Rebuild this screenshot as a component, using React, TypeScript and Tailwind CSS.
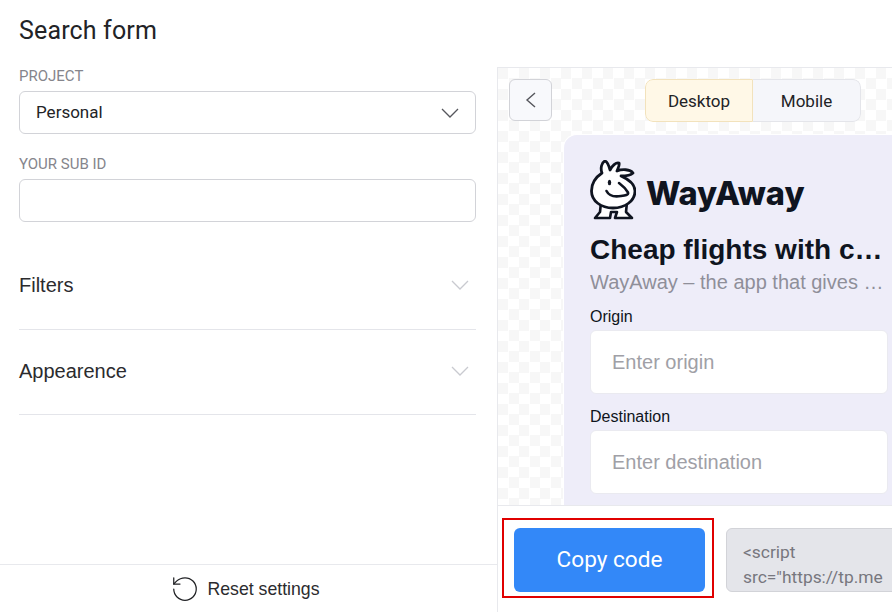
import { RotateCcw } from 'lucide-react';

function Mascot() {
  return (
    <svg width="46" height="60" viewBox="0 0 46 60" fill="none" className="shrink-0">
      <path
        d="M11 42 L10 52 L5 58 L20 58 L21 52 L27 52 L25 58 L42 58 L36 52 L37 42 Z"
        fill="#fff"
        stroke="#0f1420"
        strokeWidth="2.6"
        strokeLinejoin="round"
      />
      <path
        d="M12 13 C10 8 12 2 15 1 C18 2 19 6 20 10 C22 6 26 2 29 3 C30 5 28 8 27 11 C32 9 40 9 43 13 C40 16 35 16 31 16 C40 20 45 25 45 31 C45 41 35 48 23 48 C11 48 1.5 41 1.5 31 C1.5 23 6 17 12 13 Z"
        fill="#fff"
        stroke="#0f1420"
        strokeWidth="2.8"
        strokeLinejoin="round"
      />
      <ellipse cx="19.5" cy="22.5" rx="1.7" ry="2.8" fill="#0f1420" />
      <path
        d="M16.5 31 C19 36 25 37 31 36 C35 35.5 39 35 38 32.5 C36 29 33 26 29 23"
        stroke="#0f1420"
        strokeWidth="2.6"
        strokeLinecap="round"
      />
    </svg>
  );
}

function Chevron({ className }: { className: string }) {
  return (
    <svg width="18" height="10" viewBox="0 0 18 10" fill="none" className={className}>
      <path d="M1 1 L9 9 L17 1" stroke="currentColor" strokeWidth="1.3" />
    </svg>
  );
}

function Field({ label, placeholder }: { label: string; placeholder: string }) {
  return (
    <div className="flex flex-col">
      <div className="h-[23px] text-[16px] leading-[19px] text-[#0f1420]">{label}</div>
      <div className="flex h-[64px] items-center rounded-[6px] border border-[#eaeaf0] bg-white px-[21px] text-[20px] text-[#a0a0a6]">
        {placeholder}
      </div>
    </div>
  );
}

function Accordion({ title, height }: { title: string; height: string }) {
  return (
    <div className={`${height} flex items-center justify-between border-b border-[#e4e5ea] pr-[7px]`}>
      <span className="text-[20px] text-[#2b2b2e] [font-family:'Liberation_Sans',sans-serif]">{title}</span>
      <Chevron className="text-[#c9cad0]" />
    </div>
  );
}

export default function App() {
  return (
    <div className="flex h-[612px] w-[892px] flex-col overflow-hidden bg-white [font-family:Roboto,sans-serif]">
      <div className="flex h-[67px] items-start pl-[19px] pt-[15px] text-[25px] leading-[32px] tracking-[0.15px] text-[#222326]">
        Search form
      </div>

      <div className="flex min-h-0 flex-1">
        {/* Settings */}
        <div className="flex w-[497px] shrink-0 flex-col">
          <div className="flex-1 pl-[19px] pr-[21px]">
            <div className="flex h-[24px] items-start text-[15px] leading-[18px] text-[#85858c]">PROJECT</div>
            <div className="flex h-[43px] items-center justify-between rounded-[6px] border border-[#d2d3d8] pl-[16px] pr-[16px] text-[17px] text-[#222326]">
              Personal
              <Chevron className="text-[#55565c]" />
            </div>
            <div className="mt-[21px] flex h-[24px] items-start text-[15px] leading-[18px] text-[#85858c]">YOUR SUB ID</div>
            <div className="h-[43px] rounded-[6px] border border-[#d2d3d8]" />
            <div className="mt-[22px]">
              <Accordion title="Filters" height="h-[86px] pb-[4px]" />
              <Accordion title="Appearence" height="h-[85px] pb-[2px]" />
            </div>
          </div>
          <div className="flex h-[48px] items-center justify-center gap-[7px] border-t border-[#e8e9ed] pr-[7px] pt-[1px] text-[17.7px] text-[#2b2b2e] [font-family:'Liberation_Sans',sans-serif]">
            <RotateCcw size={30} strokeWidth={1} className="text-[#222326]" />
            Reset settings
          </div>
        </div>

        {/* Preview */}
        <div className="flex min-w-0 flex-1 flex-col border-l border-[#e8e9ed]">
          <div className="h-[439px] overflow-hidden border-y border-[#e8e9ed] bg-white bg-[conic-gradient(#ffffff_25%,#f7f7f7_0_50%,#ffffff_0_75%,#f7f7f7_0)] bg-[length:21px_21px] pl-[11px] pt-[11px]">
            <div className="flex h-[43px] items-start">
              <button className="flex h-[42px] w-[43px] items-center justify-center rounded-[6px] border border-[#d2d3d8] bg-[#f8f9fc] text-[#55565c]">
                <svg width="11" height="16" viewBox="0 0 11 16" fill="none">
                  <path d="M10 1 L2 8 L10 15" stroke="currentColor" strokeWidth="1.4" />
                </svg>
              </button>
              <div className="ml-[93px] flex h-[43px] w-[216px] overflow-hidden rounded-[8px] text-[17px] text-[#222326]">
                <div className="flex w-[108px] items-center justify-center rounded-l-[8px] border border-[#f2e2bc] bg-[#fff8e7] pt-[2px]">Desktop</div>
                <div className="flex w-[108px] items-center justify-center rounded-r-[8px] border border-l-0 border-[#e4e5ea] bg-[#f5f6fa] pt-[2px]">Mobile</div>
              </div>
            </div>
            <div className="ml-[54px] mt-[12px] h-[380px] w-[352px] shrink-0 rounded-t-[14px] border border-b-0 border-white bg-[#eeedf9] pl-[25px] pr-[26px] pt-[25px] [font-family:'Liberation_Sans',sans-serif]">
              <div className="flex h-[60px] items-center gap-[10px] pl-[1px]">
                <Mascot />
                <span className="pt-[6px] text-[32.6px] font-extrabold leading-none text-[#0f1420] [font-family:Inter,sans-serif]">WayAway</span>
              </div>
              <div className="ml-[1px] mt-[14px] truncate text-[28px] font-bold leading-[32px] text-[#0f1420]">Cheap flights with cashback</div>
              <div className="ml-[1px] mt-[3px] truncate text-[20px] leading-[26px] text-[#8f8f99]">WayAway – the app that gives you cashback on flights</div>
              <div className="ml-[1px] mt-[12px] flex flex-col gap-[13px]">
                <Field label="Origin" placeholder="Enter origin" />
                <Field label="Destination" placeholder="Enter destination" />
              </div>
            </div>
          </div>

          {/* Copy code */}
          <div className="flex flex-1 items-start pt-[12px]">
            <div className="ml-[4px] shrink-0 border-2 border-[#e00000] pb-[4px] pl-[10px] pr-[7px] pt-[8px]">
              <button className="flex h-[64px] w-[191px] items-center justify-center rounded-[6px] bg-[#3388f8] text-[22.6px] text-white">
                Copy code
              </button>
            </div>
            <div className="ml-[12px] mt-[10px] h-[64px] w-[300px] shrink-0 rounded-[6px] border border-[#d2d3d8] bg-[#e4e5ea] pl-[16px] pt-[11px] text-[17.4px] leading-[25px] text-[#77777e]">
              <div>&lt;script</div>
              <div>src=&quot;https://tp.me</div>
            </div>
          </div>
        </div>
      </div>
    </div>
  );
}
